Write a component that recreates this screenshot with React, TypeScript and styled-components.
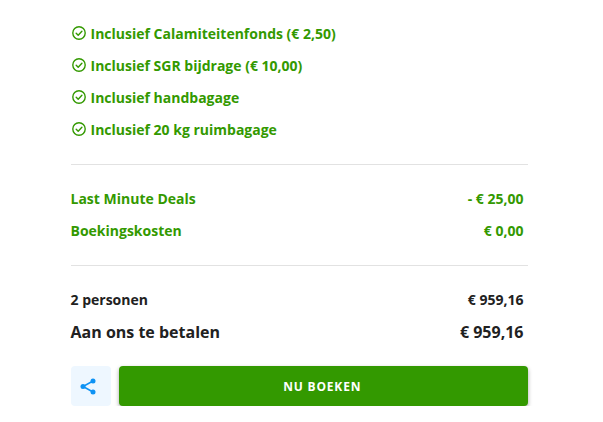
import React from "react";
import styled, { createGlobalStyle } from "styled-components";

const GlobalStyle = createGlobalStyle`
  body {
    margin: 0;
    background: #fff;
    font-family: "Open Sans", sans-serif;
  }
`;

const Container = styled.div`
  width: 457.5px;
  padding: 17px 75px 0 70.5px;
`;

const Checks = styled.ul`
  list-style: none;
  margin: 0;
  padding: 0 0 19px;
  border-bottom: 1px solid #e2e2e2;
`;

const Check = styled.li`
  height: 32px;
  display: flex;
  align-items: center;
  gap: 4.5px;
  padding-left: 1.5px;
  font-size: 14px;
  font-weight: 700;
  color: #339900;
`;

const Section = styled.div`
  padding: 17px 4.5px 19px 0;
  border-bottom: 1px solid #e2e2e2;
`;

const Totals = styled.div`
  padding: 17px 4.5px 0 0;
`;

const Row = styled.div<{ $color?: string; $big?: boolean }>`
  height: ${(p) => (p.$big ? "34px" : "32px")};
  display: flex;
  align-items: center;
  justify-content: space-between;
  font-size: ${(p) => (p.$big ? "16px" : "14px")};
  font-weight: 700;
  color: ${(p) => p.$color || "#212121"};
`;

const Actions = styled.div`
  display: flex;
  gap: 8px;
  margin-top: 17px;
`;

const ShareButton = styled.button`
  width: 40px;
  height: 40px;
  padding: 0 5px 0 0;
  border: 0;
  border-radius: 4px;
  background: #eef7ff;
  display: flex;
  align-items: center;
  justify-content: center;
`;

const BookButton = styled.button`
  flex: 1;
  height: 40px;
  padding: 0 2px 0 0;
  border: 0;
  border-radius: 4px;
  background: #339900;
  color: #fff;
  font-family: inherit;
  font-size: 12px;
  font-weight: 700;
  letter-spacing: 0.8px;
  box-shadow: 0 2px 4px rgba(0, 0, 0, 0.35);
`;

const CheckIcon = () => (
  <svg width="14" height="14" viewBox="0 0 14 14" fill="none" stroke="#339900" strokeWidth="1.4" strokeLinecap="round" strokeLinejoin="round">
    <circle cx="7" cy="7" r="6.2" />
    <path d="M4.2 7.2 6.2 9.2 9.9 5.2" />
  </svg>
);

const ShareIcon = () => (
  <svg width="16" height="17" viewBox="0 0 16 17" fill="#0d92f4" stroke="#0d92f4">
    <path d="M13 3 3 8.5 13 14" fill="none" strokeWidth="1.5" />
    <circle cx="13" cy="3" r="2.5" stroke="none" />
    <circle cx="3" cy="8.5" r="2.5" stroke="none" />
    <circle cx="13" cy="14" r="2.5" stroke="none" />
  </svg>
);

const App = () => {
  const checks = [
    "Inclusief Calamiteitenfonds (€ 2,50)",
    "Inclusief SGR bijdrage (€ 10,00)",
    "Inclusief handbagage",
    "Inclusief 20 kg ruimbagage",
  ];

  return (
    <Container>
      <GlobalStyle />
      <Checks>
        {checks.map((c) => (
          <Check key={c}>
            <CheckIcon />
            {c}
          </Check>
        ))}
      </Checks>
      <Section>
        <Row $color="#339900">
          <span>Last Minute Deals</span>
          <span>- € 25,00</span>
        </Row>
        <Row $color="#339900">
          <span>Boekingskosten</span>
          <span>€ 0,00</span>
        </Row>
      </Section>
      <Totals>
        <Row>
          <span>2 personen</span>
          <span>€ 959,16</span>
        </Row>
        <Row $big>
          <span>Aan ons te betalen</span>
          <span>€ 959,16</span>
        </Row>
      </Totals>
      <Actions>
        <ShareButton>
          <ShareIcon />
        </ShareButton>
        <BookButton>NU BOEKEN</BookButton>
      </Actions>
    </Container>
  );
};

export default App;
